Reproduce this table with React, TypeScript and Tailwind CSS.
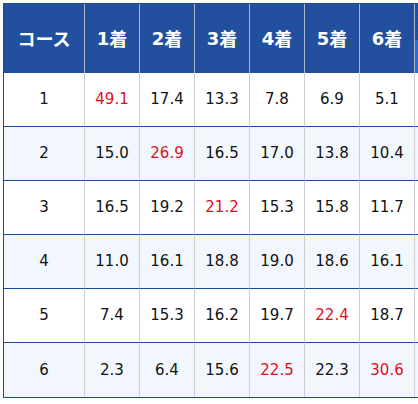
import React from 'react';

const heads = ['1着', '2着', '3着', '4着', '5着', '6着'];

// red = indexes highlighted in red
const rows: { course: string; vals: string[]; red: number[] }[] = [
    { course: '1', vals: ['49.1', '17.4', '13.3', '7.8', '6.9', '5.1'], red: [0] },
    { course: '2', vals: ['15.0', '26.9', '16.5', '17.0', '13.8', '10.4'], red: [1] },
    { course: '3', vals: ['16.5', '19.2', '21.2', '15.3', '15.8', '11.7'], red: [2] },
    { course: '4', vals: ['11.0', '16.1', '18.8', '19.0', '18.6', '16.1'], red: [] },
    { course: '5', vals: ['7.4', '15.3', '16.2', '19.7', '22.4', '18.7'], red: [4] },
    { course: '6', vals: ['2.3', '6.4', '15.6', '22.5', '22.3', '30.6'], red: [3, 5] },
];

const pattern =
    'bg-[#214f9f] bg-[image:repeating-conic-gradient(#1c4894_0_25%,#2757a8_0_50%)] bg-[length:2px_2px]';

export default function App() {
    return (
        <div className="w-[418px] h-[404px] overflow-hidden bg-white pt-[3px] pl-[3px]" style={{ fontFamily: '"DejaVu Sans", "Noto Sans CJK JP", sans-serif' }}>
            <div className="w-[480px] border-t border-l border-b border-[#1a4b9c] grid grid-cols-[81px_repeat(6,55px)_60px]">
                {/* header */}
                <div className={`h-[69px] flex items-center justify-center border-r border-[#aab8d4] text-white font-bold text-[18px] ${pattern}`} style={{ fontFamily: '"Noto Sans CJK JP", "DejaVu Sans", sans-serif' }}>
                    コース
                </div>
                {heads.map((h) => (
                    <div key={h} className={`h-[69px] flex items-center justify-center border-r border-[#aab8d4] text-white font-bold text-[18px] ${pattern}`}>
                        <span className="font-bold" style={{ fontFamily: '"DejaVu Sans", sans-serif' }}>{h.slice(0, 1)}</span>
                        <span style={{ fontFamily: '"Noto Sans CJK JP", sans-serif' }}>{h.slice(1)}</span>
                    </div>
                ))}
                <div className="h-[69px] flex flex-col">
                    <div className={`h-[36px] ${pattern}`}></div>
                    <div className="flex-1 bg-[#2e6bd0]"></div>
                </div>

                {/* body */}
                {rows.map((r, ri) => {
                    const bg = ri % 2 === 0 ? 'bg-white' : 'bg-[#f2f7fe]';
                    const bb = ri < rows.length - 1 ? 'border-b border-b-[#1a4b9c]' : '';
                    return (
                        <React.Fragment key={r.course}>
                            <div className={`h-[54px] flex items-center justify-center text-[15px] text-[#111] border-r border-r-[#cfcfcf] ${bg} ${bb}`}>
                                {r.course}
                            </div>
                            {r.vals.map((v, vi) => (
                                <div
                                    key={vi}
                                    className={`h-[54px] flex items-center justify-center text-[15px] border-r border-r-[#cfcfcf] ${bg} ${bb} ${r.red.includes(vi) ? 'text-[#e0101a]' : 'text-[#111]'}`}
                                >
                                    {v}
                                </div>
                            ))}
                            <div className={`h-[54px] ${bg} ${bb}`}></div>
                        </React.Fragment>
                    );
                })}
            </div>
        </div>
    );
}
